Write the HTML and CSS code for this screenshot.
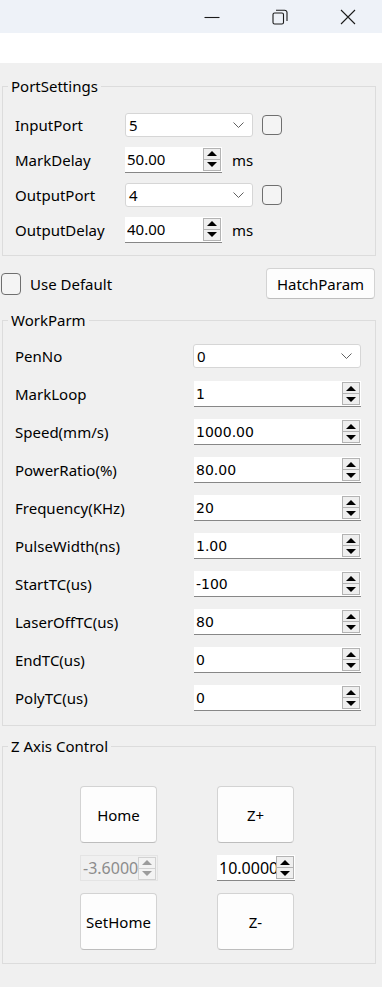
FILE: index.html
```html
<!DOCTYPE html>
<html lang="en">
<head>
  <meta charset="UTF-8" />
  <meta name="viewport" content="width=device-width, initial-scale=1.0" />
  <title>Mark Parameters</title>
  <link rel="stylesheet" href="styles.css">
</head>
<body>
  <div class="titlebar">
    <span class="caption-btn">
      <svg viewBox="0 0 16 16"><path d="M0.5 8.5 H15.5" /></svg>
    </span>
    <span class="caption-btn">
      <svg viewBox="0 0 16 16">
        <rect x="1" y="4" width="10.5" height="11" rx="1.6" />
        <path d="M4 1.2 H12.6 A2.4 2.4 0 0 1 15 3.6 V12" />
      </svg>
    </span>
    <span class="caption-btn">
      <svg viewBox="0 0 16 16"><path d="M1 1 L15 15 M15 1 L1 15" /></svg>
    </span>
  </div>
  <div class="strip"></div>

  <div class="panel">
    <fieldset class="group port-group">
      <legend>PortSettings</legend>
      <div class="port-body">
        <div class="port-row">
          <span class="label">InputPort</span>
          <div class="combo port-combo">
            <span>5</span>
            <svg class="chevron" viewBox="0 0 11 6"><path d="M0.5 0.5 L5.5 5.5 L10.5 0.5" /></svg>
          </div>
          <span class="check"></span>
        </div>
        <div class="port-row">
          <span class="label">MarkDelay</span>
          <div class="spin port-spin">
            <span class="spin-value">50.00</span>
            <span class="spin-btns"><b class="up"></b><b class="down"></b></span>
          </div>
          <span class="unit">ms</span>
        </div>
        <div class="port-row">
          <span class="label">OutputPort</span>
          <div class="combo port-combo">
            <span>4</span>
            <svg class="chevron" viewBox="0 0 11 6"><path d="M0.5 0.5 L5.5 5.5 L10.5 0.5" /></svg>
          </div>
          <span class="check"></span>
        </div>
        <div class="port-row">
          <span class="label">OutputDelay</span>
          <div class="spin port-spin">
            <span class="spin-value">40.00</span>
            <span class="spin-btns"><b class="up"></b><b class="down"></b></span>
          </div>
          <span class="unit">ms</span>
        </div>
      </div>
    </fieldset>

    <div class="default-row">
      <span class="check big"></span>
      <span class="default-label">Use Default</span>
      <span class="btn hatch-btn">HatchParam</span>
    </div>

    <fieldset class="group work-group">
      <legend>WorkParm</legend>
      <div class="work-body">
        <div class="work-row">
          <span class="label wide">PenNo</span>
          <div class="combo work-combo">
            <span>0</span>
            <svg class="chevron" viewBox="0 0 11 6"><path d="M0.5 0.5 L5.5 5.5 L10.5 0.5" /></svg>
          </div>
        </div>
        <div class="work-row">
          <span class="label wide">MarkLoop</span>
          <div class="spin work-spin"><span class="spin-value">1</span><span class="spin-btns"><b class="up"></b><b class="down"></b></span></div>
        </div>
        <div class="work-row">
          <span class="label wide">Speed(mm/s)</span>
          <div class="spin work-spin"><span class="spin-value">1000.00</span><span class="spin-btns"><b class="up"></b><b class="down"></b></span></div>
        </div>
        <div class="work-row">
          <span class="label wide">PowerRatio(%)</span>
          <div class="spin work-spin"><span class="spin-value">80.00</span><span class="spin-btns"><b class="up"></b><b class="down"></b></span></div>
        </div>
        <div class="work-row">
          <span class="label wide">Frequency(KHz)</span>
          <div class="spin work-spin"><span class="spin-value">20</span><span class="spin-btns"><b class="up"></b><b class="down"></b></span></div>
        </div>
        <div class="work-row">
          <span class="label wide">PulseWidth(ns)</span>
          <div class="spin work-spin"><span class="spin-value">1.00</span><span class="spin-btns"><b class="up"></b><b class="down"></b></span></div>
        </div>
        <div class="work-row">
          <span class="label wide">StartTC(us)</span>
          <div class="spin work-spin"><span class="spin-value">-100</span><span class="spin-btns"><b class="up"></b><b class="down"></b></span></div>
        </div>
        <div class="work-row">
          <span class="label wide">LaserOffTC(us)</span>
          <div class="spin work-spin"><span class="spin-value">80</span><span class="spin-btns"><b class="up"></b><b class="down"></b></span></div>
        </div>
        <div class="work-row">
          <span class="label wide">EndTC(us)</span>
          <div class="spin work-spin"><span class="spin-value">0</span><span class="spin-btns"><b class="up"></b><b class="down"></b></span></div>
        </div>
        <div class="work-row">
          <span class="label wide">PolyTC(us)</span>
          <div class="spin work-spin"><span class="spin-value">0</span><span class="spin-btns"><b class="up"></b><b class="down"></b></span></div>
        </div>
      </div>
    </fieldset>

    <fieldset class="group z-group">
      <legend>Z Axis Control</legend>
      <div class="z-grid">
        <span class="btn z-btn">Home</span>
        <span class="btn z-btn">Z+</span>
        <div class="spin z-spin disabled"><span class="spin-value">-3.6000</span><span class="spin-btns"><b class="up"></b><b class="down"></b></span></div>
        <div class="spin z-spin"><span class="spin-value">10.0000</span><span class="spin-btns"><b class="up"></b><b class="down"></b></span></div>
        <span class="btn z-btn">SetHome</span>
        <span class="btn z-btn">Z-</span>
      </div>
    </fieldset>
  </div>
</body>
</html>
```

FILE: styles.css
```css
* {
  box-sizing: border-box;
}

body {
  margin: 0;
  background: #f0f0f0;
  color: #000;
  font-family: "Noto Sans", sans-serif;
  font-size: 15px;
  overflow: hidden;
}

/* window caption */
.titlebar {
  height: 33px;
  background: #eef2f8;
  display: flex;
  align-items: center;
  padding-left: 178px;
}

.caption-btn {
  width: 70px;
  display: flex;
  justify-content: center;
}

.caption-btn svg {
  width: 16px;
  height: 16px;
  fill: none;
  stroke: #1b1b1b;
  stroke-width: 1.1;
}

.strip {
  height: 30px;
  background: #fff;
}

.panel {
  padding: 0 6px 0 2px;
}

/* group boxes */
.group {
  margin: 0;
  padding: 0;
  min-width: 0;
  border: 1px solid #dcdcdc;
}

.group legend {
  margin-left: 5px;
  padding: 0 3px;
  line-height: 18px;
}

.port-group {
  margin-top: 14px;
}

.port-body {
  padding: 12px 0 8px 12px;
}

.port-row {
  height: 35px;
  display: flex;
  align-items: center;
}

.label {
  width: 110px;
  flex: none;
  line-height: 20px;
}

.label.wide {
  width: 178px;
}

.unit {
  margin-left: 10px;
  line-height: 20px;
}

/* combo box */
.combo {
  height: 24px;
  display: flex;
  align-items: center;
  padding: 0 8px 0 3px;
  background: #fff;
  border: 1px solid #d6d6d6;
  border-radius: 3px;
  line-height: 20px;
}

.combo span {
  flex: 1;
}

.chevron {
  width: 11px;
  height: 6px;
  fill: none;
  stroke: #606060;
  stroke-width: 1;
}

.port-combo {
  width: 128px;
  margin-right: 9px;
}

.work-combo {
  width: 168px;
}

/* check box */
.check {
  width: 20px;
  height: 20px;
  flex: none;
  border: 1px solid #6f6f6f;
  border-radius: 4px;
  background: #f4f4f4;
}

.check.big {
  height: 22px;
  margin-left: -1px;
}

/* spin box */
.spin {
  height: 26px;
  display: flex;
  align-items: center;
  padding: 0 1px 0 2px;
  background: #fff;
  border-bottom: 1px solid #878787;
}

.spin-value {
  flex: 1;
  overflow: hidden;
  white-space: nowrap;
  line-height: 20px;
}

.spin-btns {
  width: 18px;
  height: 23px;
  flex: none;
  display: flex;
  flex-direction: column;
  border: 1px solid #b3b3b3;
  background: #efefef;
}

.spin-btns b {
  flex: 1;
  display: flex;
  align-items: center;
  justify-content: center;
}

.spin-btns .up {
  border-bottom: 1px solid #b3b3b3;
}

.spin-btns .up::after,
.spin-btns .down::after {
  content: "";
  border-left: 5px solid transparent;
  border-right: 5px solid transparent;
}

.spin-btns .up::after {
  border-bottom: 5px solid #000;
}

.spin-btns .down::after {
  border-top: 5px solid #000;
}

.port-spin {
  width: 97px;
}

.work-spin {
  width: 167px;
  margin-left: 1px;
  font-family: "DejaVu Sans", sans-serif;
  font-size: 14px;
}

.z-spin {
  width: 78px;
  font-size: 16px;
}

.spin.disabled {
  background: #f0f0f0;
  border: 1px solid #e4e4e4;
  color: #8c8c8c;
}

.spin.disabled .spin-btns {
  border-color: #d2d2d2;
  background: #f3f3f3;
}

.spin.disabled .up {
  border-bottom-color: #d2d2d2;
}

.spin.disabled .up::after {
  border-bottom-color: #9c9c9c;
}

.spin.disabled .down::after {
  border-top-color: #9c9c9c;
}

/* buttons */
.btn {
  display: flex;
  align-items: center;
  justify-content: center;
  background: #fdfdfd;
  border: 1px solid #d3d3d3;
  border-bottom-color: #bdbdbd;
  border-radius: 4px;
}

.default-row {
  margin-top: 12px;
  height: 31px;
  display: flex;
  align-items: center;
}

.default-label {
  margin-left: 9px;
  flex: 1;
  line-height: 20px;
}

.hatch-btn {
  width: 109px;
  height: 31px;
  margin-right: 1px;
}

.work-group {
  margin-top: 12px;
}

.work-body {
  padding: 8px 0 8px 12px;
}

.work-row {
  height: 38px;
  display: flex;
  align-items: center;
}

.z-group {
  margin-top: 11px;
}

.z-grid {
  display: grid;
  grid-template-columns: 77px 77px;
  grid-template-rows: 57px 26px 57px;
  column-gap: 60px;
  row-gap: 12px;
  padding: 31px 0 13px 77px;
}
```
